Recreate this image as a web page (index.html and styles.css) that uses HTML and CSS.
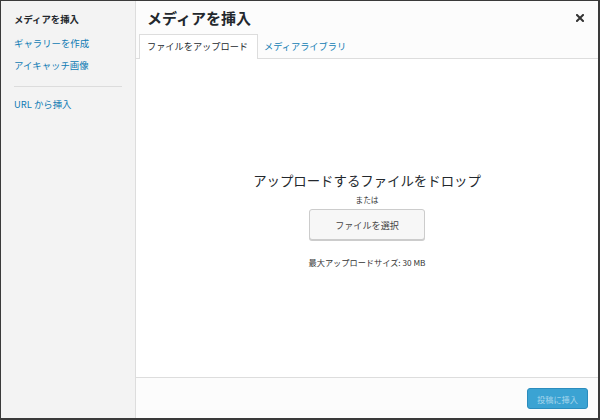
FILE: index.html
```html
<!DOCTYPE html>
<html lang="ja">
<head>
<meta charset="utf-8">
<link rel="stylesheet" href="styles.css">
</head>
<body>
<div class="modal">
  <aside class="sidebar">
    <div class="side-title">メディアを挿入</div>
    <a class="side-link">ギャラリーを作成</a>
    <a class="side-link">アイキャッチ画像</a>
    <div class="side-sep"></div>
    <a class="side-link">URL から挿入</a>
  </aside>
  <main class="main">
    <header class="header">
      <h1 class="title">メディアを挿入</h1>
      <button class="close" aria-label="閉じる">
        <svg width="8" height="8" viewBox="0 0 8 8"><path d="M1 1L7 7M7 1L1 7" stroke="#333" stroke-width="2" stroke-linecap="square"/></svg>
      </button>
      <nav class="tabs">
        <span class="tab active">ファイルをアップロード</span>
        <span class="tab">メディアライブラリ</span>
      </nav>
    </header>
    <section class="content">
      <div class="drop-title">アップロードするファイルをドロップ</div>
      <div class="or">または</div>
      <button class="select-btn">ファイルを選択</button>
      <div class="max">最大アップロードサイズ: 30 MB</div>
    </section>
    <footer class="footer">
      <button class="insert-btn">投稿に挿入</button>
    </footer>
  </main>
</div>
</body>
</html>
```

FILE: styles.css
```css
html, body {
  margin: 0;
  padding: 0;
}
body {
  background: #3a3a3a;
  width: 600px;
  height: 420px;
  overflow: hidden;
  font-family: "Noto Sans CJK JP", "Noto Sans", sans-serif;
  color: #23282d;
}
.modal {
  margin: 1px 2px 2px 1px;
  height: 417px;
  display: flex;
  background: #fff;
}
.sidebar {
  width: 108px;
  flex: none;
  background: #f3f3f3;
  border-right: 1px solid #dddddd;
  padding: 11px 13px 0 13px;
  box-sizing: content-box;
  display: flex;
  flex-direction: column;
  font-size: 9.4px;
  line-height: 14px;
}
.side-title {
  font-weight: bold;
  color: #23282d;
  margin-bottom: 10px;
}
.side-link {
  color: #0f7bb3;
  margin-bottom: 8px;
}
.side-sep {
  height: 1px;
  background: #dcdcdc;
  margin: 6px 0 10px 0;
}
.main {
  flex: 1;
  display: flex;
  flex-direction: column;
  min-width: 0;
}
.header {
  background: #fcfcfc;
  position: relative;
  padding-top: 7px;
}
.title {
  margin: 0 0 6px 11px;
  font-size: 15px;
  line-height: 20px;
  font-weight: bold;
  color: #23282d;
}
.close {
  position: absolute;
  top: 13px;
  right: 14px;
  border: 0;
  background: none;
  padding: 0;
  width: 8px;
  height: 8px;
  display: flex;
}
.tabs {
  display: flex;
  border-bottom: 1px solid #dddddd;
  padding-left: 3px;
  height: 24px;
}
.tab {
  font-size: 9.2px;
  line-height: 22px;
  padding: 0 8px 0 5px;
  color: #0f7bb3;
  border: 1px solid transparent;
  border-bottom: 0;
}
.tab.active {
  color: #23282d;
  background: #fff;
  border-color: #dddddd;
  height: 24px;
  padding: 0 9px 0 7px;
}
.content {
  flex: 1;
  background: #fff;
  display: flex;
  flex-direction: column;
  align-items: center;
  padding-top: 111px;
}
.drop-title {
  font-size: 13.4px;
  line-height: 20px;
  color: #23282d;
}
.or {
  font-size: 7.7px;
  line-height: 12px;
  margin-top: 4px;
  color: #333;
}
.select-btn {
  margin-top: 3px;
  width: 116px;
  height: 31px;
  border: 1px solid #cccccc;
  border-radius: 3px;
  background: #f7f7f7;
  box-shadow: 0 1px 0 #cccccc;
  font-family: inherit;
  font-size: 9.1px;
  color: #444;
  padding: 0;
}
.max {
  margin-top: 16px;
  font-size: 8.2px;
  line-height: 12px;
  color: #333;
}
.footer {
  height: 40px;
  flex: none;
  border-top: 1px solid #dddddd;
  background: #fcfcfc;
  display: flex;
  justify-content: flex-end;
  align-items: flex-start;
  padding-right: 10px;
}
.insert-btn {
  margin-top: 10px;
  width: 61px;
  height: 21px;
  border: 1px solid #2b8cbd;
  border-radius: 3px;
  background: #3ba3d3;
  color: #a7d6ec;
  font-family: inherit;
  font-size: 8.2px;
  padding: 0;
}
```
